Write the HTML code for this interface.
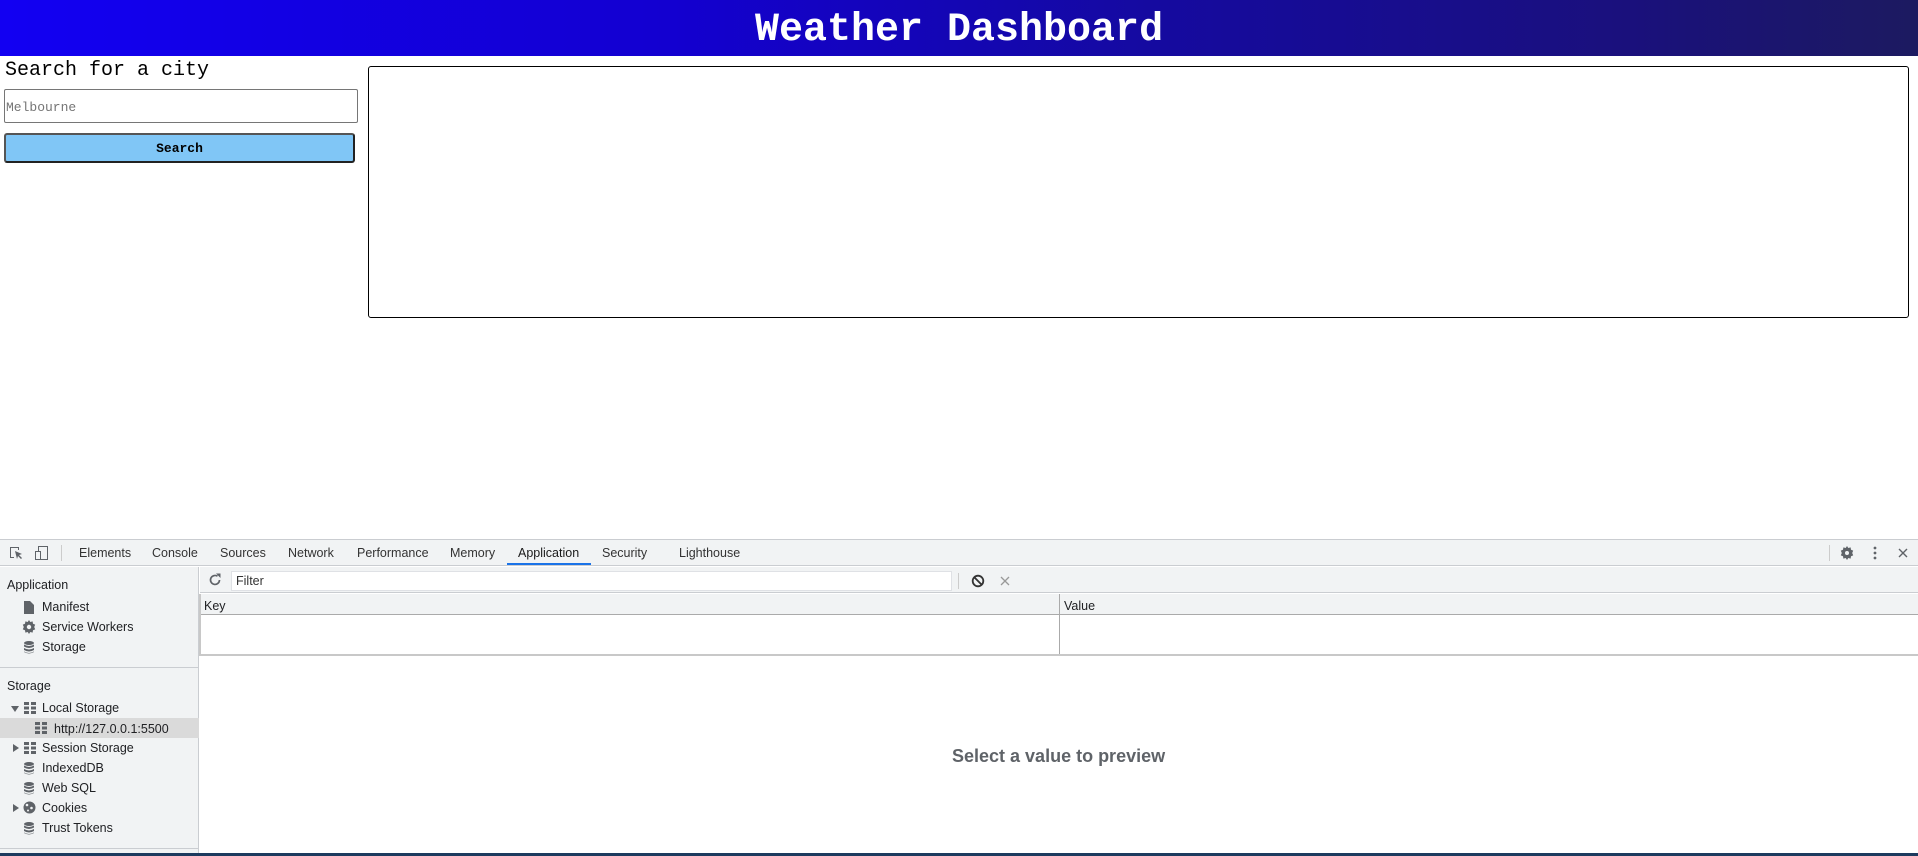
<!DOCTYPE html>
<html><head><meta charset="utf-8"><style>
*{box-sizing:border-box;margin:0;padding:0}
body{width:1918px;height:856px;position:relative;overflow:hidden;background:#fff;font-family:"Liberation Sans",sans-serif}
.a{position:absolute}
.hdr{left:0;top:0;width:1918px;height:56px;background:linear-gradient(to right,#1200f2 0%,#1300d0 35%,#150aa0 60%,#1a107c 85%,#1c1a60 100%)}
.hdr h1{font:bold 40px "Liberation Mono",monospace;color:#fff;text-align:center;line-height:56px;position:absolute;left:755px;top:3px;white-space:nowrap}
.mono{font-family:"Liberation Mono",monospace}
.dt{font-size:12.5px;color:#202124}
.tab{top:540px;height:26px;line-height:26px;color:#333;font-size:12.5px}
.side{font-size:12.5px;color:#202124}
</style></head><body>
<div class="a hdr"><h1>Weather Dashboard</h1></div>
<div class="a mono" style="left:5px;top:59px;font-size:20px;line-height:24px;color:#000">Search for a city</div>
<div class="a" style="left:4px;top:89px;width:354px;height:34px;border:1px solid #767676;border-radius:2px"></div>
<div class="a mono" style="left:6px;top:100px;font-size:13px;color:#757575">Melbourne</div>
<div class="a" style="left:4px;top:133px;width:351px;height:30px;background:#80c6f6;border:2px solid #222;border-color:#555 #222 #222 #555;border-radius:3px"></div>
<div class="a mono" style="left:4px;top:141px;width:351px;text-align:center;font-size:13px;font-weight:bold;color:#000">Search</div>
<div class="a" style="left:368px;top:66px;width:1541px;height:252px;border:1px solid #000;border-radius:3px"></div>

<div class="a" style="left:0;top:539px;width:1918px;height:317px;background:#fff;border-top:1px solid #cacdd1"></div>
<div class="a" style="left:0;top:540px;width:1918px;height:26px;background:#f1f3f4;border-bottom:1px solid #cacdd1"></div>
<svg class="a" style="left:8px;top:545px" width="16" height="16" viewBox="0 0 16 16"><path d="M2 2h9v3h-1V3H3v9h3v1H2z" fill="#5f6368"/><path d="M7 6l7 3-3 1 3 3-1 1-3-3-1 3z" fill="#5f6368"/></svg>
<svg class="a" style="left:34px;top:545px" width="16" height="16" viewBox="0 0 16 16"><rect x="4.5" y="1.5" width="9" height="13" fill="none" stroke="#5f6368"/><rect x="1.5" y="6.5" width="5" height="8" fill="#f1f3f4" stroke="#5f6368"/></svg>
<div class="a" style="left:61px;top:545px;width:1px;height:16px;background:#ccc"></div>
<div class="a tab" style="left:79px">Elements</div>
<div class="a tab" style="left:152px">Console</div>
<div class="a tab" style="left:220px">Sources</div>
<div class="a tab" style="left:288px">Network</div>
<div class="a tab" style="left:357px">Performance</div>
<div class="a tab" style="left:450px">Memory</div>
<div class="a tab" style="left:518px;color:#1a1a1a">Application</div>
<div class="a" style="left:507px;top:563px;width:84px;height:2px;background:#1a73e8"></div>
<div class="a tab" style="left:602px">Security</div>
<div class="a tab" style="left:679px">Lighthouse</div>
<div class="a" style="left:1829px;top:545px;width:1px;height:16px;background:#ccc"></div>
<svg class="a" style="left:1840px;top:546px" width="14" height="14" viewBox="0 0 14 14"><path d="M7 0l1.3 2 2.3-.6.4 2.3 2.2.9-1 2.4 1 2.4-2.2.9-.4 2.3-2.3-.6L7 14l-1.3-2-2.3.6-.4-2.3L.8 9.4l1-2.4-1-2.4L3 3.7l.4-2.3 2.3.6z" fill="#5f6368"/><circle cx="7" cy="7" r="2" fill="#f1f3f4"/></svg>
<svg class="a" style="left:1872px;top:546px" width="6" height="14"><circle cx="3" cy="2" r="1.4" fill="#5f6368"/><circle cx="3" cy="7" r="1.4" fill="#5f6368"/><circle cx="3" cy="12" r="1.4" fill="#5f6368"/></svg>
<svg class="a" style="left:1898px;top:548px" width="10" height="10"><path d="M1 1l8 8M9 1L1 9" stroke="#5f6368" stroke-width="1.4"/></svg>

<div class="a" style="left:0;top:567px;width:199px;height:287px;background:#f1f3f4;border-right:1px solid #cacdd1"></div>
<div class="a side" style="left:7px;top:578px">Application</div>
<svg class="a" style="left:24px;top:601px" width="10" height="13"><path d="M0 0h6l4 4v9H0z" fill="#5f6368"/></svg>
<div class="a side" style="left:42px;top:600px">Manifest</div>
<svg class="a" style="left:22px;top:620px" width="14" height="14" viewBox="0 0 14 14"><path d="M7 0l1.3 2 2.3-.6.4 2.3 2.2.9-1 2.4 1 2.4-2.2.9-.4 2.3-2.3-.6L7 14l-1.3-2-2.3.6-.4-2.3L.8 9.4l1-2.4-1-2.4L3 3.7l.4-2.3 2.3.6z" fill="#5f6368"/><circle cx="7" cy="7" r="2.2" fill="#f1f3f4"/></svg>
<div class="a side" style="left:42px;top:620px">Service Workers</div>
<svg class="a" style="left:24px;top:641px" width="10" height="13" viewBox="0 0 10 13"><ellipse cx="5" cy="2" rx="5" ry="2" fill="#5f6368"/><path d="M0 3.5q5 3 10 0v2q-5 3-10 0zM0 7q5 3 10 0v2q-5 3-10 0zM0 10.5q5 3 10 0v.5q-5 3-10 0z" fill="#5f6368"/></svg>
<div class="a side" style="left:42px;top:640px">Storage</div>
<div class="a" style="left:0;top:667px;width:199px;height:1px;background:#cacdd1"></div>
<div class="a side" style="left:7px;top:679px">Storage</div>
<svg class="a" style="left:11px;top:705px" width="8" height="8"><path d="M0 1h8L4 7z" fill="#5f6368"/></svg>
<svg class="a" style="left:24px;top:702px" width="12" height="12"><path d="M0 0h5v3H0zM7 0h5v3H7zM0 4.5h5v3H0zM7 4.5h5v3H7zM0 9h5v3H0zM7 9h5v3H7z" fill="#5f6368"/></svg>
<div class="a side" style="left:42px;top:701px">Local Storage</div>
<div class="a" style="left:0;top:718px;width:199px;height:20px;background:#dadada"></div>
<svg class="a" style="left:35px;top:722px" width="12" height="12"><path d="M0 0h5v3H0zM7 0h5v3H7zM0 4.5h5v3H0zM7 4.5h5v3H7zM0 9h5v3H0zM7 9h5v3H7z" fill="#5f6368"/></svg>
<div class="a side" style="left:54px;top:722px">http://127.0.0.1:5500</div>
<svg class="a" style="left:12px;top:744px" width="8" height="8"><path d="M1 0v8l6-4z" fill="#5f6368"/></svg>
<svg class="a" style="left:24px;top:742px" width="12" height="12"><path d="M0 0h5v3H0zM7 0h5v3H7zM0 4.5h5v3H0zM7 4.5h5v3H7zM0 9h5v3H0zM7 9h5v3H7z" fill="#5f6368"/></svg>
<div class="a side" style="left:42px;top:741px">Session Storage</div>
<svg class="a" style="left:24px;top:762px" width="10" height="13" viewBox="0 0 10 13"><ellipse cx="5" cy="2" rx="5" ry="2" fill="#5f6368"/><path d="M0 3.5q5 3 10 0v2q-5 3-10 0zM0 7q5 3 10 0v2q-5 3-10 0zM0 10.5q5 3 10 0v.5q-5 3-10 0z" fill="#5f6368"/></svg>
<div class="a side" style="left:42px;top:761px">IndexedDB</div>
<svg class="a" style="left:24px;top:782px" width="10" height="13" viewBox="0 0 10 13"><ellipse cx="5" cy="2" rx="5" ry="2" fill="#5f6368"/><path d="M0 3.5q5 3 10 0v2q-5 3-10 0zM0 7q5 3 10 0v2q-5 3-10 0zM0 10.5q5 3 10 0v.5q-5 3-10 0z" fill="#5f6368"/></svg>
<div class="a side" style="left:42px;top:781px">Web SQL</div>
<svg class="a" style="left:12px;top:804px" width="8" height="8"><path d="M1 0v8l6-4z" fill="#5f6368"/></svg>
<svg class="a" style="left:23px;top:801px" width="13" height="13"><circle cx="6.5" cy="6.5" r="6" fill="#5f6368"/><circle cx="4" cy="4" r="1.3" fill="#f1f3f4"/><circle cx="8.5" cy="7" r="1.3" fill="#f1f3f4"/><circle cx="5" cy="9.5" r="1" fill="#f1f3f4"/></svg>
<div class="a side" style="left:42px;top:801px">Cookies</div>
<svg class="a" style="left:24px;top:822px" width="10" height="13" viewBox="0 0 10 13"><ellipse cx="5" cy="2" rx="5" ry="2" fill="#5f6368"/><path d="M0 3.5q5 3 10 0v2q-5 3-10 0zM0 7q5 3 10 0v2q-5 3-10 0zM0 10.5q5 3 10 0v.5q-5 3-10 0z" fill="#5f6368"/></svg>
<div class="a side" style="left:42px;top:821px">Trust Tokens</div>
<div class="a" style="left:0;top:848px;width:199px;height:1px;background:#cacdd1"></div>

<div class="a" style="left:200px;top:567px;width:1718px;height:26px;background:#f1f3f4;border-bottom:1px solid #cacdd1"></div>
<svg class="a" style="left:208px;top:573px" width="14" height="14" viewBox="0 0 14 14"><path d="M11.5 7A4.5 4.5 0 1 1 9.5 3.2" fill="none" stroke="#5f6368" stroke-width="1.7"/><path d="M8 0.5h4.5v4.5z" fill="#5f6368"/></svg>
<div class="a" style="left:231px;top:571px;width:721px;height:20px;background:#fff;border:1px solid #dfe1e5"></div>
<div class="a dt" style="left:236px;top:574px;color:#333">Filter</div>
<div class="a" style="left:958px;top:573px;width:1px;height:16px;background:#ccc"></div>
<svg class="a" style="left:971px;top:574px" width="14" height="14"><circle cx="7" cy="7" r="5.3" fill="none" stroke="#333" stroke-width="1.8"/><path d="M3.3 3.3l7.4 7.4" stroke="#333" stroke-width="1.8"/></svg>
<svg class="a" style="left:1000px;top:576px" width="10" height="10"><path d="M1 1l8 8M9 1L1 9" stroke="#999" stroke-width="1.3"/></svg>
<div class="a" style="left:200px;top:594px;width:1718px;height:21px;background:#f1f3f4;border-bottom:1px solid #aaa"></div>
<div class="a dt" style="left:204px;top:599px">Key</div>
<div class="a dt" style="left:1064px;top:599px">Value</div>
<div class="a" style="left:1059px;top:594px;width:1px;height:61px;background:#aaa"></div>
<div class="a" style="left:200px;top:654px;width:1718px;height:2px;background:#c8c8c8"></div>
<div class="a" style="left:199px;top:594px;width:2px;height:62px;background:#c8c8c8"></div>
<div class="a" style="left:952px;top:746px;font-size:18px;font-weight:bold;color:#5f6368;white-space:nowrap">Select a value to preview</div>
<div class="a" style="left:0;top:853px;width:1918px;height:3px;background:#1c3a5e"></div>
</body></html>
